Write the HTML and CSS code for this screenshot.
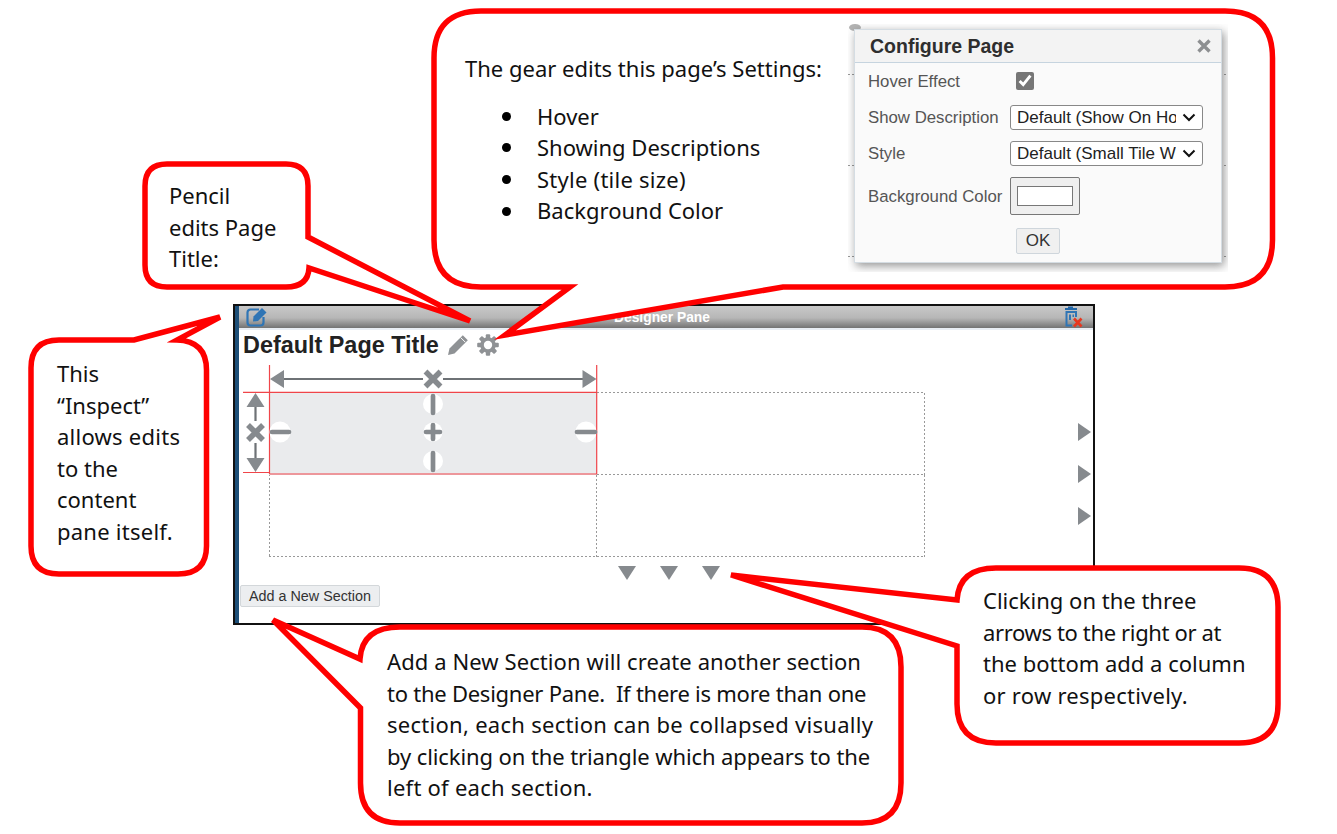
FILE: index.html
```html
<!DOCTYPE html>
<html lang="en">
<head>
<meta charset="utf-8">
<title>Designer Pane overview</title>
<link rel="stylesheet" href="styles.css">
</head>
<body>
<main class="canvas">

  <section class="pane">
    <header class="pane-head">
      <svg class="icon-edit" viewBox="0 0 22 20" width="22" height="20" aria-hidden="true">
        <path d="M13 2.500H4.500A3 3 0 0 0 1.500 5.500V15.500A3 3 0 0 0 4.500 18.500H14.500A3 3 0 0 0 17.500 15.500V10" fill="none" stroke="#2f75b5" stroke-width="2.200"/>
        <path d="M7.500 9.500 16 1 20.500 5.500 12 14 7 14.500Z" fill="#2f75b5"/>
      </svg>
      <span class="pane-name">Designer Pane</span>
      <svg class="icon-trash" viewBox="0 0 22 22" width="22" height="22" aria-hidden="true">
        <path d="M4 2H7V0.500H12V2H16V4H4Z" fill="#2468a8"/>
        <path d="M4.500 5H16V11H14V7H6.500V18.500H11V20.500H4.500Z" fill="#2f75b5"/>
        <path d="M8 8.500H10V14H8ZM11.500 8.500H13V11H11.500Z" fill="#2f75b5"/>
        <path d="M13 12.500 20.500 20.500M20.500 12.500 13 20.500" stroke="#e8371f" stroke-width="2.600"/>
      </svg>
    </header>

    <div class="title-row">
      <h1 class="page-title">Default Page Title</h1>
      <svg class="tool" viewBox="0 0 22 22" width="22" height="22" aria-hidden="true">
        <path d="M15.800 1.200 20.800 6.200 7.500 19.500 1 21 2.500 14.500Z" fill="#8f9295"/>
        <path d="M13.800 3.700 18.300 8.200" stroke="#fff" stroke-width="1"/>
      </svg>
      <svg class="tool" viewBox="-11 -11 22 22" width="22" height="22" aria-hidden="true">
        <g fill="#8f9295">
          <rect x="-2.200" y="-10.800" width="4.400" height="21.600" rx="1"/>
          <rect x="-2.200" y="-10.800" width="4.400" height="21.600" rx="1" transform="rotate(45)"/>
          <rect x="-2.200" y="-10.800" width="4.400" height="21.600" rx="1" transform="rotate(90)"/>
          <rect x="-2.200" y="-10.800" width="4.400" height="21.600" rx="1" transform="rotate(135)"/>
        </g>
        <circle r="6.200" fill="none" stroke="#8f9295" stroke-width="3.200"/>
        <circle r="4.200" fill="#fff"/>
      </svg>
    </div>

    <div class="stage">
      <div class="cells">
        <div class="cell cell-active"></div>
        <div class="cell"></div>
        <div class="cell"></div>
        <div class="cell"></div>
      </div>
      <div class="add-cols">
        <span class="tri-right"></span>
        <span class="tri-right"></span>
        <span class="tri-right"></span>
      </div>
      <svg class="guides" viewBox="239 360 370 120" width="370" height="120" aria-hidden="true">
        <g stroke="#f0454a" stroke-width="1.200">
          <path d="M269.500 365V474M596.700 365V474M243 392.300H597M243 472.500H269.500M269.500 474H597" fill="none"/>
        </g>
        <g fill="#fff">
          <circle cx="433" cy="404" r="10"/>
          <circle cx="433" cy="461" r="10"/>
          <circle cx="280" cy="432" r="10.500"/>
          <circle cx="586" cy="432" r="10.500"/>
          <circle cx="433" cy="432" r="9.500"/>
        </g>
        <g stroke="#868a8e" stroke-width="4.700" stroke-linecap="round" fill="none">
          <path d="M433 396V413M433 453V470M272 432H289M577 432H595M433 425V439M426 432H440"/>
        </g>
        <g stroke="#6e7276" stroke-width="2.200" fill="none">
          <path d="M282 379H423M443 379H584M255.500 405V421M255.500 443V459"/>
        </g>
        <g fill="#868a8e">
          <path d="M270 379 284 370V388ZM596.500 379 582.500 370V388ZM255.500 393 246.500 407H264.500ZM255.500 472 246.500 458H264.500Z"/>
        </g>
        <g stroke="#868a8e" stroke-width="5.500" fill="none">
          <path d="M425.500 371.500 440.500 386.500M440.500 371.500 425.500 386.500M248 425 263 440M263 425 248 440"/>
        </g>
      </svg>
    </div>

    <div class="add-rows">
      <span class="tri-down"></span>
      <span class="tri-down"></span>
      <span class="tri-down"></span>
    </div>
    <button class="add-section" type="button">Add a New Section</button>
  </section>

  <svg class="bubbles" viewBox="0 0 1337 834" width="1337" height="834" aria-hidden="true">
    <path class="bubble" d="M481 11H1225Q1272.500 11 1272.500 58V240Q1272.500 287 1225 287H783L505 335 570 287H481Q434 287 434 240V58Q434 11 481 11Z"/>
    <path class="bubble" d="M167 164H286Q308 164 308 186V237L470 321 309 268Q308 287 286 287H167Q145 287 145 265V186Q145 164 167 164Z"/>
    <path class="bubble" d="M59 340H134L220 317 177 340Q206.500 341 206.500 370V546Q206.500 574 178 574H59Q31 574 31 546V368Q31 340 59 340Z"/>
    <path class="bubble" d="M400 627H862Q901 627 901 667V783Q901 823 862 823H400Q360.500 823 360.500 783V708L273 620 360 659Q362 627 400 627Z"/>
    <path class="bubble" d="M996 568H1239Q1278 568 1278 607V704Q1278 743 1239 743H996Q957 743 957 704V646L731 575 957 600Q959 568 996 568Z"/>
  </svg>

  <aside class="dialog-shot">
    <span class="shot-gear"></span>
    <span class="shot-dash shot-dash-a"></span>
    <span class="shot-dash shot-dash-b"></span>
    <span class="shot-dash shot-dash-c"></span>
    <div class="dialog">
      <header class="dialog-head">
        <h2 class="dialog-title">Configure Page</h2>
        <svg viewBox="0 0 14 14" width="14" height="14" aria-hidden="true">
          <path d="M1.500 1.500 12.500 12.500M12.500 1.500 1.500 12.500" stroke="#8d8f91" stroke-width="3.400"/>
        </svg>
      </header>
      <form class="dialog-form">
        <label class="dialog-label" for="hover">Hover Effect</label>
        <input class="dialog-check" id="hover" type="checkbox" checked>
        <label class="dialog-label" for="desc">Show Description</label>
        <select class="dialog-select" id="desc"><option>Default (Show On Hover)</option></select>
        <label class="dialog-label" for="style">Style</label>
        <select class="dialog-select" id="style"><option>Default (Small Tile With Icon)</option></select>
        <label class="dialog-label" for="bg">Background Color</label>
        <input class="dialog-color" id="bg" type="color" value="#ffffff">
      </form>
      <div class="dialog-foot"><button class="dialog-ok" type="button">OK</button></div>
    </div>
  </aside>

  <div class="note note-gear">
    <p class="note-lead">The gear edits this page’s Settings:</p>
    <ul class="note-list">
      <li>Hover</li>
      <li>Showing Descriptions</li>
      <li><span class="fit-wide">Style (tile size)</span></li>
      <li>Background Color</li>
    </ul>
  </div>
  <p class="note note-pencil">Pencil<br>edits Page<br>Title:</p>
  <p class="note note-inspect">This<br>“Inspect”<br><span class="fit-wide">allows edits</span><br>to the<br>content<br><span class="fit-wide">pane itself.</span></p>
  <p class="note note-section"><span class="fit-slight">Add a New Section will create another section</span><br><span class="fit-tight">to the Designer Pane.&nbsp; If there is more than one</span><br><span class="fit-loose">section, each section can be collapsed visually</span><br><span class="fit-narrow">by clicking on the triangle which appears to the</span><br><span class="fit-wide">left of each section.</span></p>
  <p class="note note-arrows">Clicking on the three<br><span class="fit-tighter">arrows to the right or at</span><br>the bottom add a column<br><span class="fit-wide">or row respectively.</span></p>

</main>
</body>
</html>
```
FILE: styles.css
```css
* { box-sizing: border-box; }

html, body { margin: 0; background: #fff; }

.canvas {
  position: relative;
  width: 1337px;
  height: 834px;
  overflow: hidden;
  font-family: "Liberation Sans", Arial, sans-serif;
}

/* Designer pane */
.pane {
  position: absolute;
  left: 233px;
  top: 304px;
  width: 862px;
  height: 321px;
  display: flex;
  flex-direction: column;
  padding-left: 4px;
  background: #fff;
  border: 2px solid #111;
  box-shadow: inset 4px 0 0 #1d4f78;
}

.pane-head {
  flex: none;
  height: 24px;
  display: flex;
  align-items: center;
  justify-content: space-between;
  padding: 0 10px 2px 7px;
  background: linear-gradient(#c8c8c8 0, #b6b6b6 50%, #747474 91%, #e8edf3 92%);
}

.pane-name {
  color: #fff;
  font-size: 13.800px;
  font-weight: bold;
  margin-right: 5px;
}

.title-row {
  flex: none;
  height: 30px;
  display: flex;
  align-items: center;
  gap: 8px;
  padding-left: 4px;
}

.page-title {
  margin: 0;
  font-size: 23.400px;
  font-weight: bold;
  color: #222;
}

.stage {
  position: relative;
  flex: none;
  display: flex;
  justify-content: space-between;
  height: 196px;
  padding: 32px 2px 0 30px;
}

.cells {
  display: grid;
  grid-template-columns: 328px 328px;
  grid-template-rows: 82px 82px;
  padding-top: 1px;
  background:
    repeating-linear-gradient(90deg, #999 0 2px, transparent 2px 4px) left top / 100% 1px no-repeat,
    repeating-linear-gradient(0deg, #999 0 2px, transparent 2px 4px) left top / 1px 100% no-repeat;
}

.cell {
  background:
    repeating-linear-gradient(90deg, #999 0 2px, transparent 2px 4px) left bottom / 100% 1px no-repeat,
    repeating-linear-gradient(0deg, #999 0 2px, transparent 2px 4px) right top / 1px 100% no-repeat;
}

.cell-active { background: #eaebed; }

.add-cols {
  display: flex;
  flex-direction: column;
  gap: 24px;
  padding-top: 31px;
}

.tri-right {
  width: 13px;
  height: 18px;
  background: #868a8e;
  clip-path: polygon(0 0, 100% 50%, 0 100%);
}

.guides {
  position: absolute;
  left: 0;
  top: 0;
}

.add-rows {
  flex: none;
  display: flex;
  gap: 24px;
  padding-left: 379px;
  margin-top: 10px;
}

.tri-down {
  width: 18px;
  height: 14px;
  background: #868a8e;
  clip-path: polygon(0 0, 100% 0, 50% 100%);
}

.add-section {
  align-self: flex-start;
  width: 140px;
  height: 22px;
  margin: 5px 0 0 1px;
  padding: 0;
  font: 14.350px "Liberation Sans", Arial, sans-serif;
  color: #333;
  background: #eceef0;
  border: 1px solid #d3d7da;
  border-radius: 2px;
}

/* Speech bubbles */
.bubbles {
  position: absolute;
  left: 0;
  top: 0;
}

.bubble {
  fill: #fff;
  stroke: #ff0000;
  stroke-width: 5.500;
  stroke-miterlimit: 5;
}

.note {
  position: absolute;
  margin: 0;
  font-family: "Noto Sans", "Liberation Sans", sans-serif;
  font-size: 22px;
  line-height: 31.600px;
  color: #111;
  white-space: nowrap;
}

.note-gear { left: 465px; top: 53px; }
.note-pencil { left: 169px; top: 180px; }
.note-inspect { left: 57px; top: 358px; }
.note-section { left: 387px; top: 646px; }
.note-arrows { left: 983px; top: 585px; }

.fit-slight { letter-spacing: .09px; }
.fit-wide { letter-spacing: .25px; }
.fit-loose { letter-spacing: .28px; }
.fit-narrow { letter-spacing: -.1px; }
.fit-tight { letter-spacing: -.25px; }
.fit-tighter { letter-spacing: -.36px; }

.note-lead { margin: 0 0 16px; }

.note-list {
  margin: 0;
  padding: 0 0 0 37px;
  list-style: none;
}

.note-list li {
  display: flex;
  align-items: center;
  gap: 26px;
}

.note-list li::before {
  content: "";
  width: 9px;
  height: 9px;
  border-radius: 50%;
  background: #000;
}

/* Configure Page capture */
.dialog-shot {
  position: absolute;
  left: 848px;
  top: 24px;
  width: 380px;
  height: 248px;
  overflow: hidden;
  background: #fff;
}

.shot-dash {
  position: absolute;
  left: 0;
  width: 100%;
  height: 1px;
  background: repeating-linear-gradient(90deg, #999 0 2px, transparent 2px 4px);
}

.shot-dash-a { top: 50px; }
.shot-dash-b { top: 141px; }
.shot-dash-c { top: 232px; }

.shot-gear {
  position: absolute;
  left: 1px;
  top: 0;
  width: 12px;
  height: 7px;
  border-radius: 50%;
  background: #b4b4b4;
}

.dialog {
  position: absolute;
  left: 6px;
  top: 5px;
  width: 368px;
  height: 234px;
  background: #fafafa;
  border: 1px solid #d5dde3;
  box-shadow: 2px 3px 9px rgba(60, 60, 60, .55);
}

.dialog-head {
  height: 33px;
  display: flex;
  align-items: center;
  justify-content: space-between;
  padding: 0 10px 0 15px;
  background: #f3f3f3;
  border-bottom: 1px solid #c6d4df;
}

.dialog-title {
  margin: 0;
  font-size: 19.500px;
  font-weight: bold;
  color: #2e2e2e;
}

.dialog-form {
  display: grid;
  grid-template-columns: 142px 193px;
  grid-template-rows: 24px 24px 24px 38px;
  row-gap: 12px;
  align-items: center;
  padding: 6px 0 0 13px;
}

.dialog-label {
  margin-top: 2px;
  font-size: 16.800px;
  color: #555;
  white-space: nowrap;
}

.dialog-check {
  justify-self: start;
  width: 18px;
  height: 18px;
  margin: 0 0 0 6px;
  accent-color: #767676;
}

.dialog-select {
  width: 193px;
  height: 25px;
  padding: 0 26px 0 6px;
  appearance: none;
  font: 17px "Liberation Sans", Arial, sans-serif;
  color: #222;
  background: #fff url("data:image/svg+xml,%3Csvg xmlns='http://www.w3.org/2000/svg' width='14' height='9'%3E%3Cpath d='M1.500 1.500 7 7l5.500-5.500' fill='none' stroke='%23111' stroke-width='2'/%3E%3C/svg%3E") no-repeat right 6px center;
  border: 1px solid #888;
  border-radius: 3px;
}

.dialog-color {
  width: 70px;
  height: 38px;
  margin: -1px 0 0;
  padding: 8px 6px;
  background: #efefef;
  border: 1px solid #777;
  border-radius: 2px;
}

.dialog-color::-webkit-color-swatch-wrapper { padding: 0; }
.dialog-color::-webkit-color-swatch { border: 1px solid #777; }

.dialog-foot {
  display: flex;
  justify-content: center;
  margin-top: 13px;
}

.dialog-ok {
  width: 44px;
  height: 26px;
  padding: 0;
  font: 17px "Liberation Sans", Arial, sans-serif;
  color: #333;
  background: #f0f0f0;
  border: 1px solid #cfd6dc;
  border-radius: 2px;
}
```
